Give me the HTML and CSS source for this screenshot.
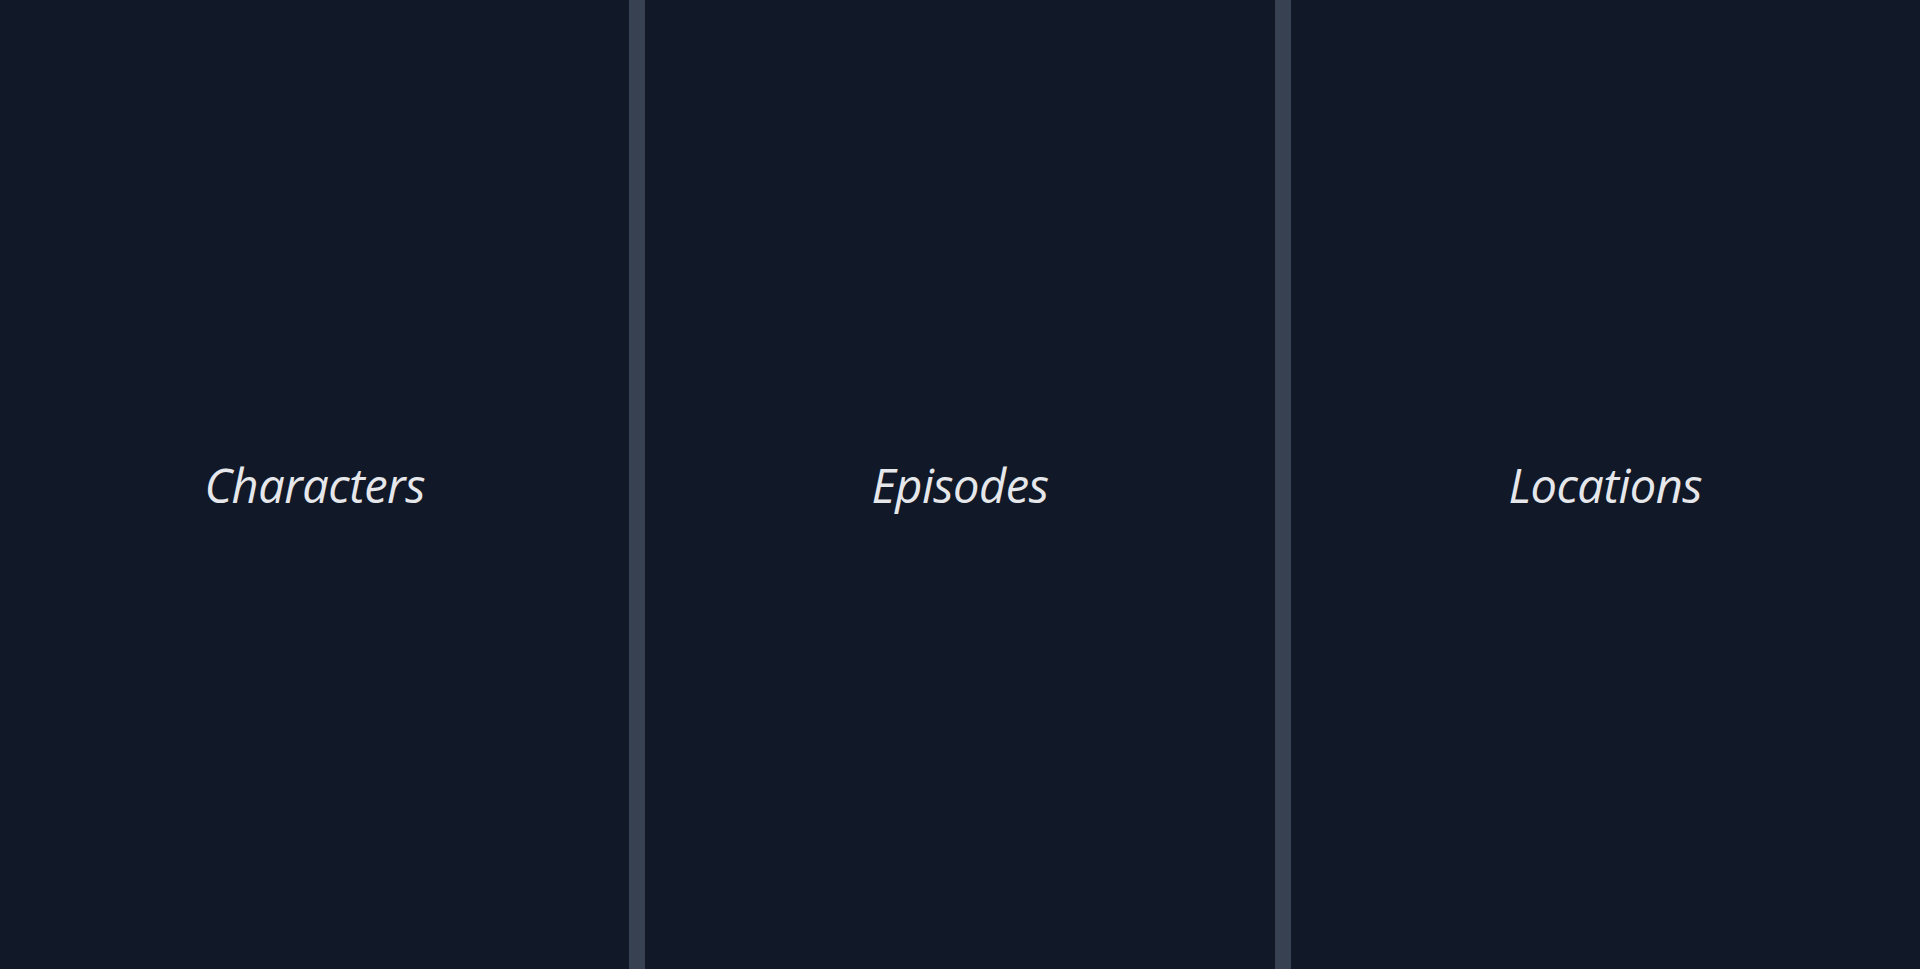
FILE: index.html
```html
<!DOCTYPE html>
<html lang="en">
<head>
<meta charset="utf-8">
<title>Rick and Morty</title>
<link rel="stylesheet" href="styles.css">
</head>
<body>
<main class="panels">
  <a class="panel" href="#characters"><span class="panel-title">Characters</span></a>
  <a class="panel" href="#episodes"><span class="panel-title">Episodes</span></a>
  <a class="panel" href="#locations"><span class="panel-title">Locations</span></a>
</main>
</body>
</html>
```

FILE: styles.css
```css
html, body {
  margin: 0;
  padding: 0;
  height: 100%;
}
body {
  background: #111827;
  font-family: "Open Sans", "Noto Sans", sans-serif;
}
.panels {
  display: flex;
  gap: 16px;
  height: 100vh;
  background: #374151;
}
.panel {
  flex: 1;
  display: flex;
  align-items: center;
  justify-content: center;
  background: #111827;
  text-decoration: none;
}
.panel-title {
  color: #e5e7eb;
  font-style: italic;
  font-size: 47px;
  letter-spacing: -0.5px;
}
```
